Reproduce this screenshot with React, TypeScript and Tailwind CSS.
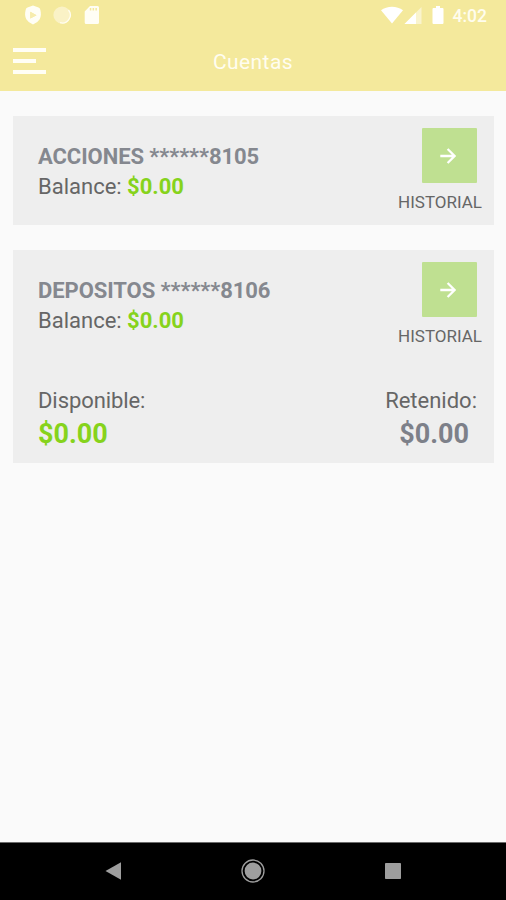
import type { ReactNode } from 'react'

type Account = {
  name: string
  balance: string
  available?: string
  held?: string
}

const accounts: Account[] = [
  { name: 'ACCIONES ******8105', balance: '$0.00' },
  { name: 'DEPOSITOS ******8106', balance: '$0.00', available: '$0.00', held: '$0.00' },
]

function StatusBar() {
  return (
    <div className="flex h-[30px] items-center justify-between pl-[24px] pr-[19px] text-white">
      <div className="flex items-center">
        <svg width="18" height="20" viewBox="0 0 18 20">
          <path
            fill="#fffef5"
            fillRule="evenodd"
            d="M9 .6 14.500 2.600Q16 3.200 16.300 4.800C17.200 8 17.200 11.500 15.700 14.300Q13.500 18 9 19.400Q4.500 18 2.300 14.300C.8 11.500.8 8 1.700 4.800Q2 3.200 3.500 2.600ZM6.300 6.800v6.800L12.500 10.200Z"
          />
          <path fill="#f7ecad" d="M6.300 6.800v6.800L12.500 10.200Z" />
        </svg>
        <svg className="ml-[10px]" width="20" height="20" viewBox="0 0 20 20">
          <circle cx="10" cy="10" r="8.600" fill="#faf2c6" />
          <path d="M16.500 5a8 8 0 0 1-8.500 12.700" fill="none" stroke="#fffdf0" strokeWidth="1.300" />
        </svg>
        <svg className="ml-[12px]" width="16" height="20" viewBox="0 0 16 20">
          <path
            fill="#fffef5"
            fillRule="evenodd"
            d="M6 1h7.500q1.500 0 1.500 1.500v15q0 1.500-1.500 1.500H2.200Q.7 19 .7 17.500V6.500ZM5.800 3v2.600h1.500V3ZM8.600 3v2.600h1.500V3ZM11.400 3v2.600h1.500V3Z"
          />
        </svg>
      </div>
      <div className="flex items-center">
        <svg width="22" height="20" viewBox="0 0 22 20">
          <path fill="#ffffff" d="M0 5.300C6 .6 16 .6 22 5.300L11 18.500Z" />
        </svg>
        <svg className="ml-[1px]" width="18" height="20" viewBox="0 0 18 20">
          <path fill="#faf4cd" d="M17.500 2v17H.5Z" />
          <path fill="#ffffff" d="M12 7.500V19H.5Z" />
        </svg>
        <svg className="ml-[10px]" width="12" height="20" viewBox="0 0 12 20">
          <path fill="#ffffff" d="M4 1h4v2h2.500q1 0 1 1v14q0 1-1 1h-9q-1 0-1-1V4q0-1 1-1H4Z" />
        </svg>
        <span className="ml-[9px] pt-[1px] text-[17.500px] font-medium leading-[20px] text-[#fffdee]">4:02</span>
      </div>
    </div>
  )
}

function Header() {
  return (
    <header className="h-[91px] bg-[#f4e99c]">
      <StatusBar />
      <div className="grid h-[61px] grid-cols-3 items-center pl-[13px] pr-[13px]">
        <button className="flex w-[33px] flex-col gap-[7px]" aria-label="Menu">
          <span className="h-[4px] w-[33px] bg-[#fffef5]" />
          <span className="h-[4px] w-[23px] bg-[#fffef5]" />
          <span className="h-[4px] w-[33px] bg-[#fffef5]" />
        </button>
        <h1 className="pt-[2px] text-center text-[21px] leading-[28px] tracking-[0.400px] text-[#fffdf0]">Cuentas</h1>
      </div>
    </header>
  )
}

function HistoryButton() {
  return (
    <div className="flex flex-col items-end">
      <button className="mr-[5px] flex h-[55px] w-[55px] items-center justify-center rounded-[1px] bg-[#bfe091]" aria-label="Historial">
        <svg className="mr-[3px]" width="16" height="16" viewBox="0 0 16 16" fill="none" stroke="#ffffff" strokeWidth="2.300">
          <path d="M.3 8H14.500M7.600 1 14.600 8l-7 7" />
        </svg>
      </button>
      <span className="mt-[8px] text-[17px] leading-[22px] text-[#666666]">HISTORIAL</span>
    </div>
  )
}

function Amount({ children, className }: { children: ReactNode; className: string }) {
  return <div className={`text-[27px] font-bold leading-[36px] ${className}`}>{children}</div>
}

function AccountCard({ account }: { account: Account }) {
  return (
    <section className="bg-[#eeeeee] pl-[25px] pr-[12px] pt-[12px]">
      <div className="flex h-[97px] justify-between">
        <div className="pt-[14px] text-[22px] leading-[29.500px]">
          <h2 className="font-bold tracking-[-0.060px] text-[#85888f]">{account.name}</h2>
          <p className="text-[#666666]">
            Balance: <span className="font-bold text-[#86d31c]">{account.balance}</span>
          </p>
        </div>
        <HistoryButton />
      </div>
      {account.available && (
        <div className="flex h-[104px] justify-between pr-[5px] pt-[27px] text-[22px] leading-[30px] text-[#666666]">
          <div>
            <p className="tracking-[-0.080px]">Disponible:</p>
            <Amount className="text-[#86d31c]">{account.available}</Amount>
          </div>
          <div className="text-right">
            <p>Retenido:</p>
            <Amount className="pr-[8px] text-[#7d8089]">{account.held}</Amount>
          </div>
        </div>
      )}
    </section>
  )
}

function NavBar() {
  return (
    <nav className="flex h-[58px] items-center justify-between border-t border-[#6b6b6b] bg-black px-[104px] pb-[1px]">
      <svg width="18" height="20" viewBox="0 0 18 20">
        <path d="M17 1.200v17.600L1.500 10Z" fill="#9e9e9e" />
      </svg>
      <svg width="26" height="26" viewBox="0 0 26 26">
        <circle cx="13" cy="13" r="11" fill="none" stroke="#9e9e9e" strokeWidth="1.300" />
        <circle cx="13" cy="13" r="8.400" fill="#9e9e9e" />
      </svg>
      <svg width="18" height="18" viewBox="0 0 18 18">
        <rect x="1" y="1" width="16" height="16" rx="0.800" fill="#9e9e9e" />
      </svg>
    </nav>
  )
}

export default function App() {
  return (
    <div className="flex h-[900px] w-[506px] flex-col bg-[#fafafa] font-['Roboto',sans-serif]">
      <Header />
      <main className="flex flex-1 flex-col gap-[25px] pl-[13px] pr-[12px] pt-[25px]">
        {accounts.map((account) => (
          <AccountCard key={account.name} account={account} />
        ))}
      </main>
      <NavBar />
    </div>
  )
}
